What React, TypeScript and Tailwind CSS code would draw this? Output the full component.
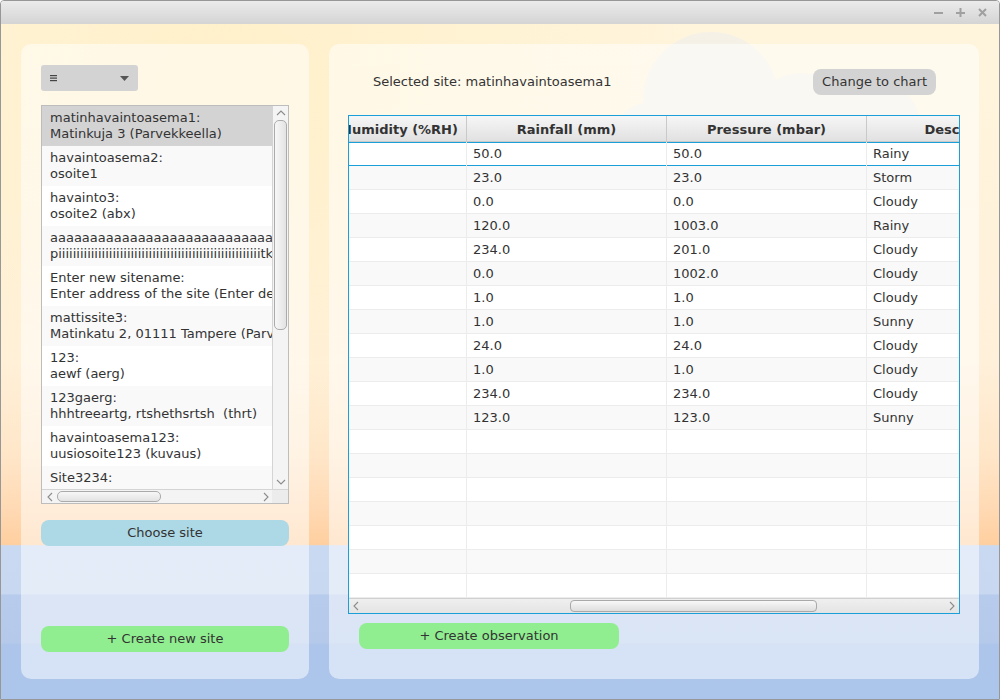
import React from "react";

const sites: [string, string][] = [
  ["matinhavaintoasema1:", "Matinkuja 3 (Parvekkeella)"],
  ["havaintoasema2:", "osoite1"],
  ["havainto3:", "osoite2 (abx)"],
  ["a".repeat(40), "p" + "i".repeat(56) + "tkaa"],
  ["Enter new sitename:", "Enter address of the site (Enter description)"],
  ["mattissite3:", "Matinkatu 2, 01111 Tampere (Parvekkeella)"],
  ["123:", "aewf (aerg)"],
  ["123gaerg:", "hhhtreeartg, rtshethsrtsh  (thrt)"],
  ["havaintoasema123:", "uusiosoite123 (kuvaus)"],
  ["Site3234:", ""],
];

const observations: [string, string, string][] = [
  ["50.0", "50.0", "Rainy"],
  ["23.0", "23.0", "Storm"],
  ["0.0", "0.0", "Cloudy"],
  ["120.0", "1003.0", "Rainy"],
  ["234.0", "201.0", "Cloudy"],
  ["0.0", "1002.0", "Cloudy"],
  ["1.0", "1.0", "Cloudy"],
  ["1.0", "1.0", "Sunny"],
  ["24.0", "24.0", "Cloudy"],
  ["1.0", "1.0", "Cloudy"],
  ["234.0", "234.0", "Cloudy"],
  ["123.0", "123.0", "Sunny"],
];

function Chevron({ dir }: { dir: "up" | "down" | "left" | "right" }) {
  const pts = {
    up: "1,6 5,2 9,6",
    down: "1,2 5,6 9,2",
    left: "6,1 2,5 6,9",
    right: "2,1 6,5 2,9",
  }[dir];
  const vertical = dir === "up" || dir === "down";
  return (
    <svg
      width={vertical ? 10 : 8}
      height={vertical ? 8 : 10}
      viewBox={vertical ? "0 0 10 8" : "0 0 8 10"}
      className="shrink-0"
    >
      <polyline points={pts} fill="none" stroke="#8c8c8c" strokeWidth="1.1" />
    </svg>
  );
}

function SiteList() {
  return (
    <div className="mt-[14px] h-[399px] border border-[#bdbdbd] bg-white flex flex-col">
      <div className="flex h-[383px]">
        <div className="w-[230px] overflow-hidden">
          {sites.map(([name, addr], i) => (
            <div
              key={i}
              className={`h-[40px] shrink-0 px-[8px] py-[4px] leading-[16px] whitespace-pre overflow-hidden ${
                i === 0 ? "bg-[#d3d3d3]" : i % 2 === 1 ? "bg-[#f9f9f9]" : "bg-white"
              }`}
            >
              <div>{name}</div>
              {addr && <div>{addr}</div>}
            </div>
          ))}
        </div>
        <div className="w-[16px] border-l border-[#d4d4d4] bg-[#f4f4f4] flex flex-col items-center">
          <div className="h-[14px] flex items-center">
            <Chevron dir="up" />
          </div>
          <div className="w-[13px] h-[210px] rounded-[5px] border border-[#ababab] bg-[linear-gradient(90deg,#f7f7f7,#e3e3e3)]" />
          <div className="flex-1" />
          <div className="h-[14px] flex items-center">
            <Chevron dir="down" />
          </div>
        </div>
      </div>
      <div className="flex h-[14px] border-t border-[#d4d4d4] bg-[#f4f4f4]">
        <div className="w-[230px] flex items-center pl-[4px]">
          <Chevron dir="left" />
          <div className="ml-[3px] w-[104px] h-[11px] rounded-[5px] border border-[#ababab] bg-[linear-gradient(180deg,#f7f7f7,#e3e3e3)]" />
          <div className="flex-1" />
          <div className="pr-[2px]">
            <Chevron dir="right" />
          </div>
        </div>
        <div className="w-[16px] bg-[#ececec]" />
      </div>
    </div>
  );
}

function ObservationTable() {
  const cell = "shrink-0 border-r border-[#ececec] flex items-center pl-[6px] whitespace-nowrap";
  const head =
    "shrink-0 h-full border-r border-[#c9c9c9] flex items-center justify-center whitespace-nowrap font-bold pt-[2px]";
  const empty = Array.from({ length: 7 });
  return (
    <div className="mt-[20px] ml-[19px] w-[612px] h-[499px] border border-[#1a9fd8] bg-white flex flex-col">
      <div className="h-[26px] shrink-0 overflow-hidden border-b border-[#c9c9c9] bg-[linear-gradient(180deg,#f6f6f6,#e1e1e1)]">
        <div className="flex h-full -ml-[16px]">
          <div className={`${head} w-[134px]`}>Humidity (%RH)</div>
          <div className={`${head} w-[200px]`}>Rainfall (mm)</div>
          <div className={`${head} w-[200px]`}>Pressure (mbar)</div>
          <div className={`${head} w-[200px]`}>Description</div>
        </div>
      </div>
      <div className="h-[456px] overflow-hidden">
        {observations.map((r, i) => (
          <div
            key={i}
            className={`flex h-[24px] -ml-[16px] ${i % 2 === 1 ? "bg-[#f9f9f9]" : "bg-white"} ${
              i === 0 ? "shadow-[inset_0_1px_0_#1a9fd8,inset_0_-1px_0_#1a9fd8]" : "border-b border-[#ececec]"
            }`}
          >
            <div className={`${cell} w-[134px]`} />
            <div className={`${cell} w-[200px]`}>{r[0]}</div>
            <div className={`${cell} w-[200px]`}>{r[1]}</div>
            <div className={`${cell} w-[200px]`}>{r[2]}</div>
          </div>
        ))}
        {empty.map((_, j) => {
          const i = observations.length + j;
          return (
            <div
              key={i}
              className={`flex h-[24px] -ml-[16px] border-b border-[#ececec] ${
                i % 2 === 1 ? "bg-[#f9f9f9]" : "bg-white"
              }`}
            >
              <div className={`${cell} w-[134px]`} />
              <div className={`${cell} w-[200px]`} />
              <div className={`${cell} w-[200px]`} />
              <div className={`${cell} w-[200px]`} />
            </div>
          );
        })}
      </div>
      <div className="h-[15px] border-t border-[#d0d0d0] bg-[linear-gradient(180deg,#efefef,#e4e4e4)] flex items-center px-[3px]">
        <Chevron dir="left" />
        <div className="ml-[210px] w-[247px] h-[12px] rounded-[4px] border border-[#a9a9a9] bg-[linear-gradient(180deg,#f8f8f8,#dedede)]" />
        <div className="flex-1" />
        <Chevron dir="right" />
      </div>
    </div>
  );
}

export default function App() {
  return (
    <div className="w-[1000px] h-[700px] border border-[#979797] rounded-t-[4px] overflow-hidden flex flex-col font-['DejaVu_Sans',sans-serif] text-[13px] text-[#333]">
      {/* Title bar */}
      <div className="h-[23px] shrink-0 bg-[linear-gradient(180deg,#ebebeb,#d4d4d4)] flex items-center justify-end pr-[12px] gap-[13px]">
        <svg width="9" height="9" viewBox="0 0 9 9">
          <rect x="0" y="4" width="9" height="2" fill="#a0a0a0" />
        </svg>
        <svg width="9" height="9" viewBox="0 0 9 9">
          <rect x="0" y="4" width="9" height="2" fill="#a0a0a0" />
          <rect x="3.5" y="0" width="2" height="9" fill="#a0a0a0" />
        </svg>
        <svg width="9" height="9" viewBox="0 0 9 9">
          <path d="M1 1 L8 8 M8 1 L1 8" stroke="#a0a0a0" strokeWidth="2" />
        </svg>
      </div>

      {/* Content with sky background */}
      <div className="relative flex-1 flex gap-[20px] px-[20px] py-[20px] bg-[radial-gradient(ellipse_at_22%_8%,#fff0c9_0%,rgba(255,240,201,0)_45%),linear-gradient(180deg,#fff5dd_0%,#fff0da_50%,#ffe6c8_64%,#ffd9b3_72%,#ffcf9f_77.1%,#cad9f2_77.3%,#c8d8f1_84.4%,#b7cbec_84.6%,#b5caeb_91.6%,#adc5ea_92%,#acc5ea_100%)]">
        <svg className="absolute left-[610px] top-[6px]" width="360" height="140" viewBox="0 0 360 140">
          <g fill="#f2efea" opacity="0.75">
            <circle cx="100" cy="70" r="68" />
            <circle cx="190" cy="95" r="52" />
            <circle cx="255" cy="100" r="55" />
            <circle cx="40" cy="110" r="38" />
            <rect x="20" y="100" width="320" height="40" />
          </g>
        </svg>

        {/* Left panel */}
        <div className="relative w-[288px] h-[635px] rounded-[10px] bg-white/50 px-[20px] pt-[21px] flex flex-col">
          <div className="w-[97px] h-[26px] rounded-[3px] bg-[#d3d3d3] flex items-center px-[9px]">
            <svg width="8" height="8" viewBox="0 0 8 8">
              <rect x="0" y="1" width="7" height="1.2" fill="#444" />
              <rect x="0" y="3.5" width="7" height="1.2" fill="#444" />
              <rect x="0" y="6" width="7" height="1.2" fill="#444" />
            </svg>
            <div className="flex-1" />
            <svg width="9" height="5" viewBox="0 0 9 5">
              <polygon points="0,0 9,0 4.5,5" fill="#555" />
            </svg>
          </div>
          <SiteList />
          <button className="mt-[16px] h-[26px] w-full rounded-[8px] bg-[#add8e6] text-[#333]">Choose site</button>
          <button className="mt-[80px] h-[26px] w-full rounded-[8px] bg-[#90ee90] text-[#333]">+ Create new site</button>
        </div>

        {/* Right panel */}
        <div className="relative w-[650px] h-[635px] rounded-[10px] bg-white/50 flex flex-col">
          <div className="flex items-center h-[26px] mt-[25px] pl-[44px] pr-[43px]">
            <span>Selected site: matinhavaintoasema1</span>
            <div className="flex-1" />
            <button className="h-[26px] px-[9px] rounded-[8px] bg-[#d3d3d3] text-[#333]">Change to chart</button>
          </div>
          <ObservationTable />
          <button className="mt-[9px] ml-[30px] w-[260px] h-[26px] rounded-[8px] bg-[#90ee90] text-[#333]">
            + Create observation
          </button>
        </div>
      </div>
    </div>
  );
}
